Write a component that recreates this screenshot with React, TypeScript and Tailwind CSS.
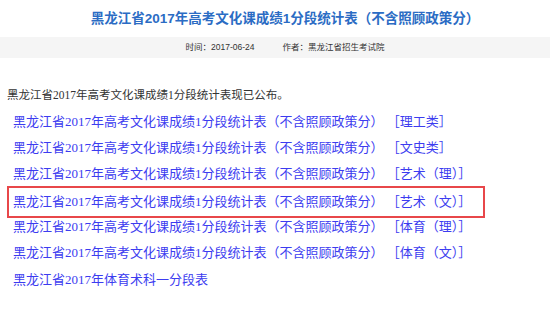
import React from 'react';

const links = [
  '［理工类］',
  '［文史类］',
  '［艺术（理）］',
  '［艺术（文）］',
  '［体育（理）］',
  '［体育（文）］',
];

const base = '黑龙江省2017年高考文化课成绩1分段统计表（不含照顾政策分） ';

export default function App() {
  return (
    <div className="w-[550px] h-[314px] bg-white overflow-hidden">
      {/* Title */}
      <div className="h-[37px] pl-[20px] flex items-center justify-center">
        <h1 className="text-[13.5px] font-bold text-[#2b6cc4] font-['Liberation_Sans','Noto_Sans_CJK_SC',sans-serif] leading-none">
          黑龙江省2017年高考文化课成绩1分段统计表（不含照顾政策分）
        </h1>
      </div>

      {/* Meta bar */}
      <div className="h-[21px] bg-[#f5f5f5] pl-[20px] flex items-center justify-center gap-[28px] text-[8.5px] text-[#333] font-['Liberation_Sans','Noto_Sans_CJK_SC',sans-serif]">
        <span>时间：2017-06-24</span>
        <span>作者：黑龙江省招生考试院</span>
      </div>

      {/* Body */}
      <div className="mt-[24px] px-[7px] font-['Liberation_Serif','Noto_Sans_CJK_SC',serif]">
        <p className="text-[11.5px] leading-[26px] text-[#333]">
          黑龙江省2017年高考文化课成绩1分段统计表现已公布。
        </p>
        {links.map((tail, i) => (
          <div
            key={tail}
            className={`relative h-[26px] leading-[26px] ${i === 3 ? 'mt-[2px]' : ''} ${i === 4 ? '-mt-[1px]' : ''}`}
          >
            {i === 3 && (
              <div className="absolute left-0 top-[-2px] w-[478px] h-[32px] border-2 border-[#e8474a]" />
            )}
            <a href="#" className="pl-[6px] text-[13px] text-[#3c3cf0] whitespace-nowrap">
              {base}
              {tail}
            </a>
          </div>
        ))}
        <div className="h-[26px] leading-[26px] mt-[1px]">
          <a href="#" className="pl-[6px] text-[13px] text-[#3c3cf0] whitespace-nowrap">
            黑龙江省2017年体育术科一分段表
          </a>
        </div>
      </div>
    </div>
  );
}
